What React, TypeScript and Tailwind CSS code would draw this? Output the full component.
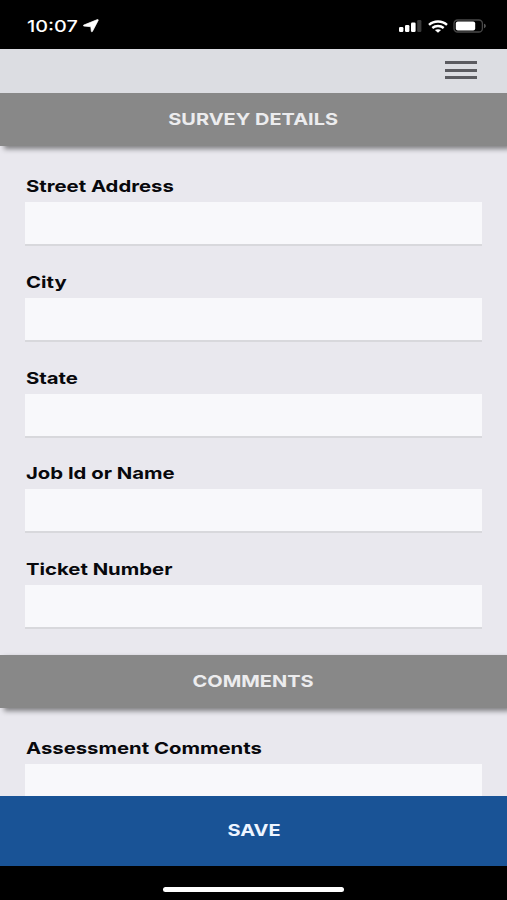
const fields = ['Street Address', 'City', 'State', 'Job Id or Name', 'Ticket Number'];

function SignalIcon() {
  return (
    <svg width="23" height="12" viewBox="0 0 23 12" fill="#fff">
      <rect x="0" y="7" width="4.4" height="5" rx="1.2" />
      <rect x="6" y="5" width="4.4" height="7" rx="1.2" />
      <rect x="12" y="2.5" width="4.6" height="9.5" rx="1.2" />
      <rect x="18.2" y="0" width="4.2" height="12" rx="1.2" fill="#3a3a3a" />
    </svg>
  );
}

function WifiIcon() {
  return (
    <svg width="20" height="13" viewBox="0 0 20 13" fill="none" stroke="#fff" strokeWidth="2.4">
      <path d="M1 4.8C6 .3 14 .3 19 4.8" />
      <path d="M4.3 8c3.2-2.7 8.2-2.7 11.4 0" />
      <path d="M6.9 10.1c1.8-1.3 4.4-1.3 6.2 0L10 12.8z" fill="#fff" stroke="none" />
    </svg>
  );
}

function BatteryIcon() {
  return (
    <svg width="34" height="14" viewBox="0 0 34 14">
      <rect x="1" y="1" width="28.4" height="12" rx="3.6" fill="none" stroke="#484848" strokeWidth="1.3" />
      <rect x="2.8" y="2.5" width="19.4" height="9" rx="2" fill="#fff" />
      <path d="M31 4.8c2.4.6 2.4 3.8 0 4.4z" fill="#555" />
    </svg>
  );
}

function StatusBar() {
  return (
    <div className="flex h-[49px] shrink-0 items-start bg-black pt-[18px] pr-[20px] pl-[27px] text-white">
      <span className="w-[56px] text-[16.5px] leading-4 font-medium">
        <span className="inline-block origin-left scale-x-[1.2]">10:07</span>
      </span>
      <svg className="mt-[1px]" width="16" height="14" viewBox="0 0 16 14" fill="#fff" stroke="#fff" strokeWidth="0.7">
        <path d="M.7 6.1 14.4.6c.6-.2 1.1.2.8.8L9.4 12.5c-.3.5-1 .4-1.1-.2L7.8 7.7.9 7.1C.2 7 .1 6.4.7 6.1z" />
      </svg>
      <div className="ml-auto flex items-center pt-[1px]">
        <div className="mr-[6px]">
          <SignalIcon />
        </div>
        <div className="mr-[5px]">
          <WifiIcon />
        </div>
        <BatteryIcon />
      </div>
    </div>
  );
}

function SectionHeader({ title }: { title: string }) {
  return (
    <h2 className="flex h-[53px] shrink-0 items-center justify-center bg-[#888888] text-[16.5px] font-bold text-[#ececee] shadow-[4px_3px_5px_rgba(0,0,0,0.45)]">
      <span className="inline-block scale-x-[1.21]">{title}</span>
    </h2>
  );
}

function Field({ label }: { label: string }) {
  return (
    <label className="block">
      <span className="flex h-8 items-center pt-[1px] pl-[0.5px] text-[16.5px] font-bold text-[#08080c]">
        <span className="inline-block origin-left scale-x-[1.23]">{label}</span>
      </span>
      <input className="block h-11 w-full border-b-2 border-[#d8d8dc] bg-[#f8f8fb] px-3 outline-none" />
    </label>
  );
}

export default function App() {
  return (
    <div className="flex h-[900px] w-[507px] flex-col overflow-hidden bg-[#e9e8ee] font-['Inter',sans-serif]">
      <StatusBar />
      <nav className="flex h-11 shrink-0 items-start justify-end bg-[#dcdde2] pt-[12px] pr-[30px]">
        <button className="flex w-8 flex-col gap-[4.5px]" aria-label="Menu">
          <span className="h-[3px] w-full bg-[#5b5b60]" />
          <span className="h-[3px] w-full bg-[#5b5b60]" />
          <span className="h-[3px] w-full bg-[#5b5b60]" />
        </button>
      </nav>
      <main className="flex min-h-0 flex-1 flex-col overflow-hidden">
        <SectionHeader title="SURVEY DETAILS" />
        <div className="flex h-[509px] shrink-0 flex-col gap-[19.75px] px-[25px] pt-[24px]">
          {fields.map((label) => (
            <Field key={label} label={label} />
          ))}
        </div>
        <SectionHeader title="COMMENTS" />
        <div className="shrink-0 px-[25px] pt-[24px]">
          <Field label="Assessment Comments" />
        </div>
      </main>
      <button className="h-[70px] shrink-0 bg-[#195396] pb-[2px] text-[16.5px] font-bold text-[#eef5ff]">
        <span className="inline-block scale-x-[1.21]">SAVE</span>
      </button>
      <div className="flex h-[34px] shrink-0 items-start justify-center bg-black pt-[21px]">
        <div className="h-[5px] w-[181px] rounded-full bg-white" />
      </div>
    </div>
  );
}
